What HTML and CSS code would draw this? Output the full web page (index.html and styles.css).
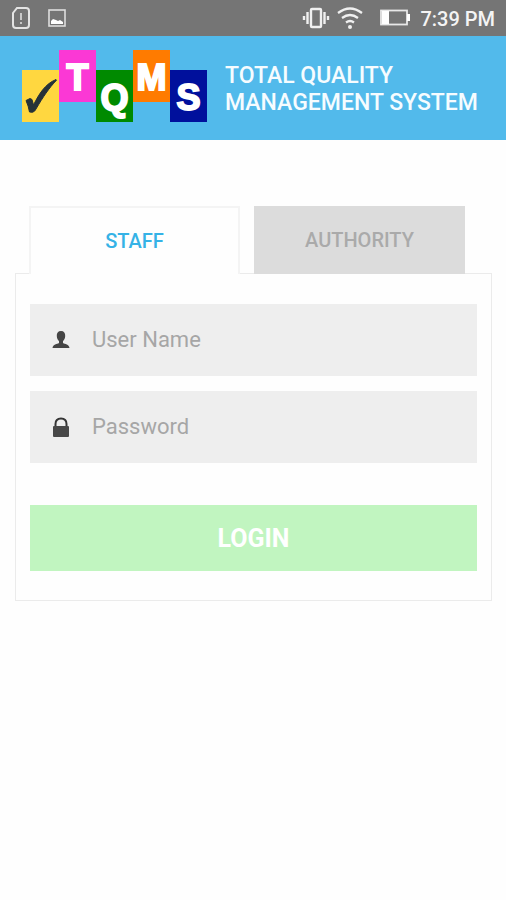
FILE: index.html
```html
<!DOCTYPE html>
<html lang="en">

<head>
    <meta charset="UTF-8">
    <meta name="viewport" content="width=device-width, initial-scale=1.0">
    <title>Total Quality Management System</title>
    <link rel="stylesheet" href="styles.css">
</head>

<body>

    <div class="status-bar">
        <div class="status-icons status-left">
            <svg width="20" height="24" viewBox="0 0 20 24" fill="none" stroke="#e4e4e4" stroke-width="2">
                <path d="M6 2h9q3 0 3 3v14q0 3-3 3H5q-3 0-3-3V7z" />
                <path d="M10 7v7M10 16v2" stroke-width="1.5" />
            </svg>
            <svg width="20" height="20" viewBox="0 0 20 20">
                <rect x="2" y="2" width="16" height="16" fill="none" stroke="#dedede" stroke-width="1.6" />
                <path d="M4 16v-3l2-2 3 1 2 1 2-1 3 2v2z" fill="#fff" />
            </svg>
        </div>
        <div class="status-icons status-right">
            <svg width="28" height="22" viewBox="0 0 28 22" fill="none" stroke="#f0f0f0" stroke-width="2">
                <rect x="9" y="2" width="10" height="18" rx="1" stroke-width="2.4" />
                <path d="M5.500 5v12M22.500 5v12M2 9v4M26 9v4" stroke-width="2.400" />
            </svg>
            <svg class="wifi" width="28" height="24" viewBox="0 0 28 24" fill="none" stroke="#f0f0f0" stroke-width="2.200">
                <path d="M2 7q12-9 24 0M6 12q8-6 16 0M10 16.500q4-3 8 0" />
                <circle cx="14" cy="21" r="2" fill="#f0f0f0" stroke="none" />
            </svg>
            <svg class="battery" width="30" height="18" viewBox="0 0 30 18">
                <rect x="1" y="1.500" width="26" height="14" fill="none" stroke="#e8e8e8" stroke-width="1.800" />
                <path d="M2 2h7v13H2zM27 5h3v7h-3z" fill="#fff" />
            </svg>
            <span class="time">7:39 PM</span>
        </div>
    </div>

    <header class="header">
        <div class="logo">
            <span class="tile yellow">
                <svg width="37" height="52" viewBox="0 0 37 52">
                    <path d="M4 30.500l4-2 2 1 1.500 5.500C17 24 23 14 34 9.500l.5.700C27 18 21 27 14 39q-1 2.500-3.500 3.300L7.500 42Q6.500 36 4 30.500z" fill="#263238" stroke="#263238" />
                </svg>
            </span>
            <span class="tile up pink">T</span>
            <span class="tile green">Q</span>
            <span class="tile up orange">M</span>
            <span class="tile navy">S</span>
        </div>
        <h1 class="title">TOTAL QUALITY MANAGEMENT SYSTEM</h1>
    </header>

    <main class="login">
        <div class="tabs" role="tablist">
            <button type="button" class="tab active" role="tab" aria-selected="true">STAFF</button>
            <button type="button" class="tab" role="tab" aria-selected="false">AUTHORITY</button>
        </div>

        <form class="panel">
            <label class="field">
                <svg width="18" height="20" viewBox="0 0 18 20">
                    <path d="M9 1c3 0 4.400 2 4.200 5-.1 2.500-1 4-2.200 5v2c2 1.200 6 1 6.500 5H.5C1 14 5 14.200 7 13v-2c-1.200-1-2.100-2.500-2.200-5C4.600 3 6 1 9 1z" fill="#454545" />
                </svg>
                <input type="text" placeholder="User Name" aria-label="User Name">
            </label>
            <label class="field">
                <svg width="18" height="20" viewBox="0 0 18 20">
                    <path d="M3.500 10V7C3.500 3.500 5.700 1.500 9 1.500s5.500 2 5.500 5.500v3" fill="none" stroke="#353535" stroke-width="2" />
                    <rect x="1" y="9" width="16" height="11" rx="1" fill="#484848" />
                </svg>
                <input type="password" placeholder="Password" aria-label="Password">
            </label>
            <button type="submit" class="login-button">LOGIN</button>
        </form>
    </main>

</body>

</html>
```
FILE: styles.css
```css
* {
    box-sizing: border-box;
}

body {
    margin: 0;
    background: #fefefe;
    font-family: Roboto, "Liberation Sans", sans-serif;
}

button,
input {
    font-family: inherit;
}

svg {
    display: block;
    flex-shrink: 0;
}

.status-bar {
    display: flex;
    justify-content: space-between;
    align-items: center;
    height: 36px;
    padding: 0 11px;
    background: #757575;
}

.status-icons {
    display: flex;
    align-items: center;
}

.status-left {
    gap: 16px;
}

.wifi {
    margin-left: 6px;
}

.battery {
    margin-left: 16px;
}

.time {
    margin-left: 10px;
    padding-top: 2px;
    color: #f4f4f4;
    font-size: 20px;
    font-weight: 500;
    line-height: 24px;
}

.header {
    display: flex;
    align-items: center;
    gap: 18px;
    padding: 14px 20px 18px 22px;
    background: #52baeb;
}

.logo {
    display: flex;
    flex-shrink: 0;
    align-items: flex-end;
    height: 72px;
}

.tile {
    display: flex;
    justify-content: center;
    width: 37px;
    height: 52px;
    color: #fff;
    font-family: "Liberation Sans", sans-serif;
    font-size: 36px;
    font-weight: 700;
    line-height: 56px;
    -webkit-text-stroke: 2px #fff;
}

.up {
    align-self: flex-start;
}

.yellow {
    background: #ffd740;
}

.pink {
    background: #fb38d5;
}

.green {
    background: #008a00;
}

.orange {
    background: #ff7b00;
}

.navy {
    background: #00109c;
}

.title {
    margin: 0;
    padding-top: 6px;
    color: #f6fcff;
    font-size: 23px;
    font-weight: 500;
    line-height: 27px;
}

.login {
    padding: 66px 14px 0 15px;
}

.tabs {
    display: grid;
    grid-template-columns: 1fr 1fr;
    gap: 14px;
    padding: 0 27px 0 14px;
}

.tab {
    position: relative;
    height: 68px;
    padding: 0;
    border: 0;
    background: #dcdcdc;
    color: #aaa;
    font-size: 20px;
    font-weight: 500;
}

/* active tab covers the top border of the panel */
.tab.active {
    border: 2px solid #f4f4f4;
    border-bottom: 0;
    background: #fefefe;
    color: #35b2e6;
}

.panel {
    display: flex;
    flex-direction: column;
    gap: 15px;
    margin: 0;
    margin-top: -1px;
    padding: 30px 14px 29px;
    border: 1px solid #ebebeb;
}

.field {
    display: flex;
    align-items: center;
    gap: 22px;
    height: 72px;
    padding: 0 22px;
    background: #eee;
}

.field input {
    flex: 1;
    min-width: 0;
    padding: 0;
    border: 0;
    outline: 0;
    background: transparent;
    color: #555;
    font-size: 22px;
    line-height: 28px;
}

.field input::placeholder {
    color: #a6a6a6;
}

.login-button {
    height: 66px;
    margin-top: 27px;
    border: 0;
    background: #c1f5c0;
    color: #fff;
    font-size: 25px;
    font-weight: 700;
}
```
